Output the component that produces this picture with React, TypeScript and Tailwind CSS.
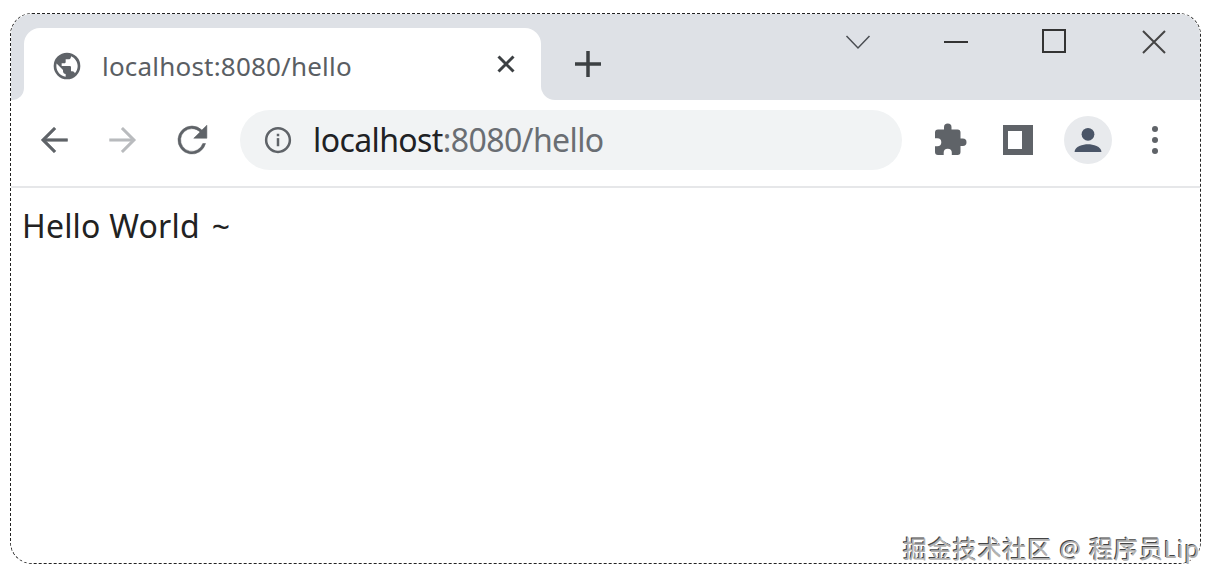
export default function App() {
  const grey = "#5f6368";
  return (
    <div className="relative w-[1218px] h-[583px] bg-white overflow-hidden font-['Noto_Sans','Noto_Sans_CJK_SC',sans-serif] pl-[10px] pt-[13px]">
      <div className="w-[1191px] h-[551px] rounded-[22px] border border-dashed border-[#222] overflow-hidden flex flex-col">
        {/* tab strip */}
        <div className="h-[86px] flex flex-col shrink-0 bg-white">
          <div className="h-[14px] bg-[#dee1e6] shrink-0" />
          <div className="flex-1 flex">
            <div className="w-[13px] bg-[#dee1e6] rounded-br-[12px] shrink-0" />
            <div className="w-[517px] bg-[#dee1e6] shrink-0">
              <div className="h-full bg-white rounded-t-[16px] flex items-center pl-[27px] pt-[3px]">
                <svg width="32" height="32" viewBox="0 0 24 24" fill="#5f6368" className="shrink-0">
                  <path d="M12 2a10 10 0 1 0 0 20 10 10 0 0 0 0-20zM4 12c0-.6.1-1.2.2-1.8L9 15v1c0 1.1.9 2 2 2v2c-3.9-.5-7-3.9-7-8zm13.900 5.400c-.3-.8-1-1.400-1.900-1.400h-1v-3c0-.6-.4-1-1-1H8v-2h2c.6 0 1-.4 1-1V7h2c1.100 0 2-.9 2-2v-.4c2.900 1.200 5 4.100 5 7.400 0 2.100-.8 4-2.100 5.400z" />
                </svg>
                <span className="ml-[19px] text-[26px] leading-none text-[#5a5e63] tracking-[0.2px] w-[250px] whitespace-nowrap">localhost:8080/hello</span>
                <svg width="20" height="20" viewBox="0 0 20 20" className="ml-[144px] mb-[3px] shrink-0" stroke="#3c4043" strokeWidth="3" fill="none">
                  <path d="M2.500 2.500 17.500 17.500M17.500 2.500 2.500 17.500" />
                </svg>
              </div>
            </div>
            <div className="flex-1 bg-[#dee1e6] rounded-bl-[14px] relative">
              <svg width="28" height="28" viewBox="0 0 28 28" className="absolute left-[33px] top-[22px]" stroke="#3c4043" strokeWidth="3.500" fill="none">
                <path d="M14 1v26M1 14h26" />
              </svg>
              <svg width="26" height="16" viewBox="0 0 26 16" className="absolute left-[304px] top-[6px]" stroke="#4a4d52" strokeWidth="1.500" fill="none">
                <path d="M1.500 2 13 14 24.500 2" />
              </svg>
              <svg width="24" height="4" viewBox="0 0 24 4" className="absolute left-[403px] top-[12px]" stroke="#333" strokeWidth="2" fill="none">
                <path d="M0 2h24" />
              </svg>
              <svg width="24" height="24" viewBox="0 0 24 24" className="absolute left-[501px] top-[1px]" stroke="#333" strokeWidth="2" fill="none">
                <rect x="1" y="1" width="22" height="22" />
              </svg>
              <svg width="26" height="26" viewBox="0 0 26 26" className="absolute left-[600px] top-[1px]" stroke="#444" strokeWidth="2" fill="none">
                <path d="M2 2 24 24M24 2 2 24" />
              </svg>
            </div>
          </div>
        </div>
        {/* toolbar */}
        <div className="h-[88px] shrink-0 flex items-center border-b-2 border-[#e6e7e9] relative pb-[6px]">
          <svg width="38" height="38" viewBox="0 0 24 24" fill={grey} stroke={grey} strokeWidth="0.4" className="ml-[24px] shrink-0">
            <path d="M20.500 11.200H7.100l6.100-6.100-1.200-1.200-8.100 8.100 8.100 8.100 1.200-1.200-6.100-6.100h13.400z" />
          </svg>
          <svg width="38" height="38" viewBox="0 0 24 24" fill="#b9bbbe" stroke="#b9bbbe" strokeWidth="0.3" className="ml-[31px] shrink-0">
            <path d="M3.500 11.200h13.400l-6.100-6.100L12 3.900l8.100 8.100-8.100 8.100-1.200-1.200 6.100-6.100H3.500z" />
          </svg>
          <svg width="42" height="42" viewBox="0 0 24 24" fill={grey} stroke={grey} strokeWidth="0.3" className="ml-[29px] shrink-0">
            <path d="M17.650 6.350A8 8 0 0 0 12 4a8 8 0 1 0 7.730 10h-1.560A6.500 6.500 0 1 1 12 5.500c1.800 0 3.400.75 4.580 1.920L13 11h7.500V3.500z" />
          </svg>
          <div className="ml-[27px] w-[662px] h-[60px] rounded-[30px] bg-[#f1f3f4] flex items-center pl-[23px] shrink-0">
            <svg width="30" height="30" viewBox="0 0 24 24" className="shrink-0" fill="none">
              <circle cx="12" cy="12" r="9.500" stroke={grey} strokeWidth="2" />
              <rect x="11" y="10.500" width="2" height="6.500" fill={grey} />
              <rect x="11" y="7" width="2" height="2" fill={grey} />
            </svg>
            <span className="ml-[20px] text-[32px] leading-none tracking-[-0.6px] whitespace-nowrap text-[#202124]">
              localhost<span className="text-[#6a6e73]">:8080/hello</span>
            </span>
          </div>
          <svg width="36" height="36" viewBox="0 0 24 24" fill={grey} className="ml-[30px] shrink-0">
            <path d="M20.500 11H19V7a2 2 0 0 0-2-2h-4V3.500a2.500 2.500 0 0 0-5 0V5H4a2 2 0 0 0-2 2v3.800h1.500a2.700 2.700 0 0 1 0 5.400H2V20a2 2 0 0 0 2 2h3.800v-1.500a2.700 2.700 0 0 1 5.400 0V22H17a2 2 0 0 0 2-2v-4h1.500a2.500 2.500 0 0 0 0-5z" />
          </svg>
          <div className="ml-[35px] w-[30px] h-[30px] border-[6px] border-l-[5px] border-r-[11px] border-[#5f6368] bg-white shrink-0" />
          <div className="ml-[31px] w-[48px] h-[48px] rounded-full bg-[#e8eaed] flex items-center justify-center shrink-0">
            <svg width="34" height="34" viewBox="0 0 24 24" fill="#4a5567">
              <circle cx="12" cy="8" r="4.500" />
              <path d="M2.500 20.500c0-4 6-5.500 9.500-5.500s9.500 1.500 9.500 5.500z" />
            </svg>
          </div>
          <div className="ml-[40px] flex flex-col gap-[5px] shrink-0">
            <div className="w-[6px] h-[6px] rounded-full bg-[#5f6368]" />
            <div className="w-[6px] h-[6px] rounded-full bg-[#5f6368]" />
            <div className="w-[6px] h-[6px] rounded-full bg-[#5f6368]" />
          </div>
        </div>
        {/* page */}
        <div className="flex-1 bg-white pl-[11px] pt-[16px]">
          <p className="text-[32px] leading-[44px] text-[#222] whitespace-nowrap tracking-[0.2px]">
            Hello World<span className="ml-[12px] text-[32px]">~</span>
          </p>
        </div>
      </div>
      <div className="absolute left-[903px] top-[533px] text-[24px] leading-[32px] whitespace-nowrap tracking-[0.9px] text-[#b0b0b0] [text-shadow:1px_1px_0_#fff,-1px_-1px_0_#444]">
        掘金技术社区 @ 程序员Lip
      </div>
    </div>
  );
}
